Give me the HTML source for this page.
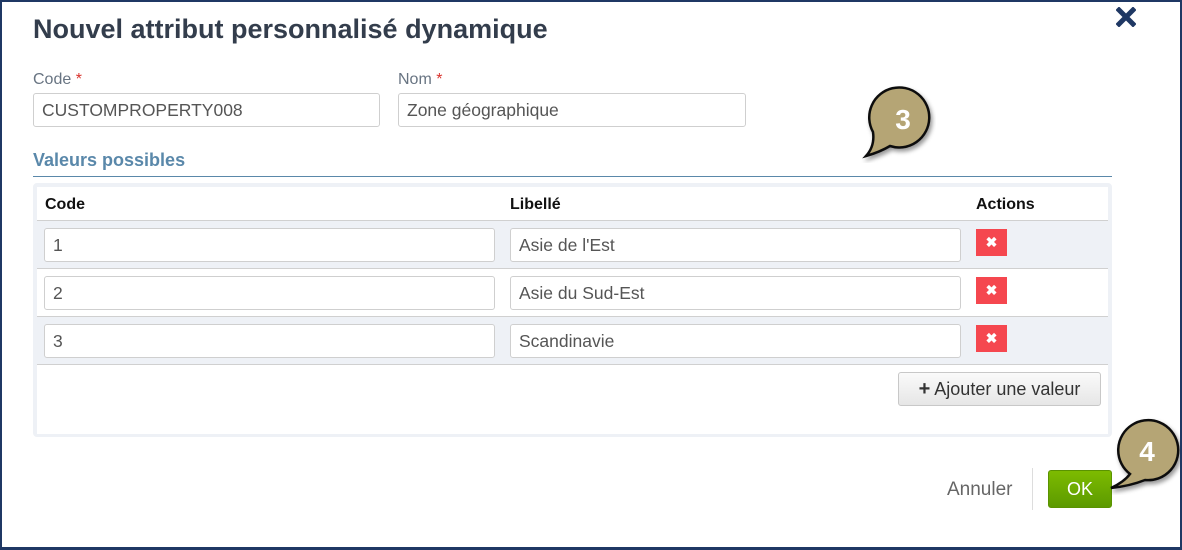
<!DOCTYPE html>
<html><head><meta charset="utf-8"><style>
*{box-sizing:border-box;margin:0;padding:0}
body{width:1182px;height:550px;overflow:hidden;background:#fff;font-family:"Liberation Sans",Arial,sans-serif;position:relative}
.frame{position:absolute;left:0;top:0;width:1182px;height:550px;border:2px solid #1f3864;border-bottom-width:3px}
.abs{position:absolute}
h1{position:absolute;left:33px;top:14px;font-size:27px;font-weight:bold;color:#333d4c}
.lbl{font-size:16px;color:#687482}
.lbl b{color:#d9312b;font-weight:normal}
.inp{position:absolute;border:1px solid #cfcfcf;border-radius:3px;background:#fff;font-size:17.5px;color:#555;padding-left:8px;line-height:32px;height:34px}
.sec{left:33px;top:150px;font-size:18px;font-weight:bold;color:#5a88aa}
.line{left:33px;top:176px;width:1079px;height:1px;background:#5a88aa}
.tbl{left:33px;top:183px;width:1079px;height:254px;border:4px solid #eef1f6;border-radius:4px;background:#fff}
.th{position:absolute;top:9px;font-size:16px;font-weight:bold;color:#111}
.row{position:absolute;left:0;width:1071px;height:48px;border-top:1px solid #d0d0d0}
.del{position:absolute;left:939px;top:8px;width:31px;height:27px;background:#f5474f;color:#fff;font-size:14px;font-weight:bold;text-align:center;line-height:27px}
.add{position:absolute;left:861px;top:185px;width:203px;height:34px;border:1px solid #c8c8c8;border-radius:3px;background:linear-gradient(#fafafa,#e6e6e6);font-size:18px;color:#333;text-align:center;line-height:32px}
.ok{left:1048px;top:470px;width:64px;height:38px;border-radius:3px;background:linear-gradient(#7dbb00,#5c9a00);color:#fff;font-size:18px;text-align:center;line-height:37px;border:1px solid #5a9300}
</style></head><body>
<h1>Nouvel attribut personnalisé dynamique</h1>
<svg class="abs" style="left:1116px;top:7px" width="20" height="20"><path d="M3,3 L17,17 M17,3 L3,17" stroke="#1f3864" stroke-width="5" stroke-linecap="square"/></svg>
<div class="abs lbl" style="left:33px;top:71px">Code <b>*</b></div>
<div class="abs lbl" style="left:398px;top:71px">Nom <b>*</b></div>
<div class="inp" style="left:33px;top:93px;width:347px">CUSTOMPROPERTY008</div>
<div class="inp" style="left:398px;top:93px;width:348px">Zone géographique</div>
<div class="abs sec">Valeurs possibles</div>
<div class="abs line"></div>
<div class="abs tbl">
 <div class="th" style="left:8px">Code</div>
 <div class="th" style="left:473px">Libellé</div>
 <div class="th" style="left:939px">Actions</div>
 <div class="row" style="top:33px;background:#eef1f6"><div class="inp" style="left:7px;top:7px;width:451px">1</div><div class="inp" style="left:473px;top:7px;width:451px">Asie de l'Est</div><div class="del">✖</div></div>
 <div class="row" style="top:81px;background:#fff"><div class="inp" style="left:7px;top:7px;width:451px">2</div><div class="inp" style="left:473px;top:7px;width:451px">Asie du Sud-Est</div><div class="del">✖</div></div>
 <div class="row" style="top:129px;background:#eef1f6"><div class="inp" style="left:7px;top:7px;width:451px">3</div><div class="inp" style="left:473px;top:7px;width:451px">Scandinavie</div><div class="del">✖</div></div>
 <div class="row" style="top:177px;background:#fff;height:70px"></div>
 <div class="add"><b style="font-size:20px">+</b> Ajouter une valeur</div>
</div>
<div class="abs" style="left:947px;top:479px;font-size:19px;color:#666">Annuler</div>
<div class="abs" style="left:1032px;top:468px;width:1px;height:42px;background:#ddd"></div>
<div class="abs ok">OK</div>
<svg class="abs" style="left:0;top:0" width="1182" height="550">
 <defs><filter id="sh"><feDropShadow dx="2" dy="3" stdDeviation="2" flood-opacity="0.4"/></filter></defs>
 <path d="M873,132 A30,30 0 1 1 890,146 Q880,152 866,156 Q875,146 873,132 Z" fill="#b5a574" stroke="#111" stroke-width="2.5" filter="url(#sh)"/>
 <text x="903" y="129" font-family="Liberation Sans" font-weight="bold" font-size="28" fill="#fff" text-anchor="middle">3</text>
 <path d="M1130,474 A30,30 0 1 1 1145,480 Q1130,486 1111,488 Q1124,482 1130,474 Z" fill="#b5a574" stroke="#111" stroke-width="2.5" filter="url(#sh)"/>
 <text x="1147" y="461" font-family="Liberation Sans" font-weight="bold" font-size="28" fill="#fff" text-anchor="middle">4</text>
</svg>
<div class="frame"></div>
</body></html>
